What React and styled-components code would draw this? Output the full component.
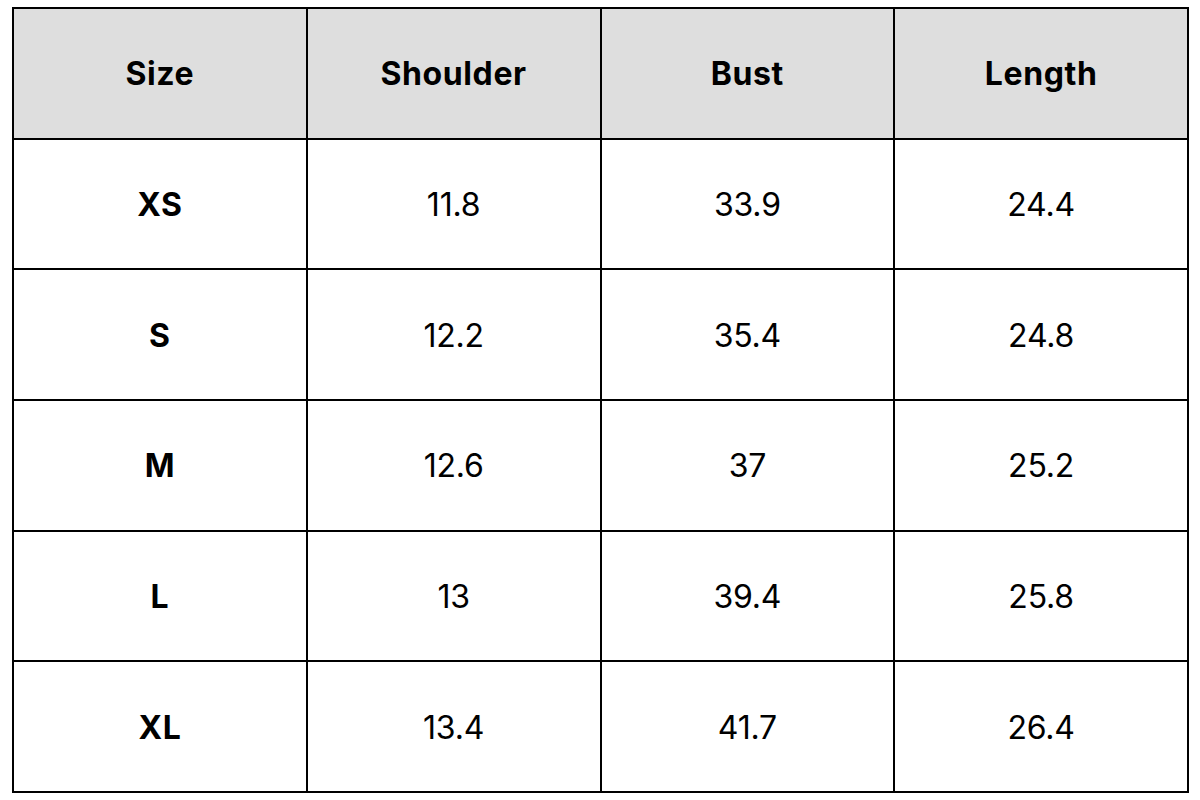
import React from "react";
import styled, { createGlobalStyle } from "styled-components";

const Global = createGlobalStyle`
  html, body { margin: 0; padding: 0; background: #ffffff; }
  body { font-family: Inter, "Open Sans", sans-serif; }
`;

const Page = styled.div`
  width: 1200px;
  height: 800px;
  padding: 7px 11px 0 12px;
  box-sizing: border-box;
  background: #ffffff;
`;

const Table = styled.div`
  display: grid;
  grid-template-columns: repeat(4, 1fr);
  grid-template-rows: repeat(6, 1fr);
  gap: 2px;
  padding: 2px;
  background: #000000;
  height: 786px;
  box-sizing: border-box;
`;

const Cell = styled.div`
  display: flex;
  align-items: center;
  justify-content: center;
  padding-top: 1px;
  background: ${(p) => (p.$head ? "#dedede" : "#ffffff")};
  color: #000000;
  font-family: Inter, "Open Sans", sans-serif;
  font-size: 32px;
  font-weight: ${(p) => (p.$bold ? 700 : 400)};
  letter-spacing: ${(p) => (p.$bold ? "0.6px" : "-0.2px")};
`;

const headers = ["Size", "Shoulder", "Bust", "Length"];
const rows = [
  ["XS", "11.8", "33.9", "24.4"],
  ["S", "12.2", "35.4", "24.8"],
  ["M", "12.6", "37", "25.2"],
  ["L", "13", "39.4", "25.8"],
  ["XL", "13.4", "41.7", "26.4"],
];

export default function App() {
  return (
    <>
      <Global />
      <Page>
        <Table>
          {headers.map((h) => (
            <Cell key={h} $head $bold>
              {h}
            </Cell>
          ))}
          {rows.map((r) =>
            r.map((v, i) => (
              <Cell key={r[0] + i} $bold={i === 0}>
                {v}
              </Cell>
            ))
          )}
        </Table>
      </Page>
    </>
  );
}
